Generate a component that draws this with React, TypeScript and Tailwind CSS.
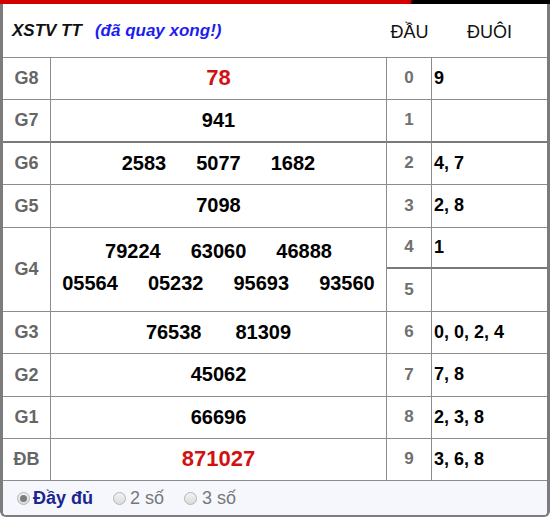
import React from "react";

type Prize = { label: string; nums: string[]; red?: boolean; thick?: boolean; gap?: string };

const PRIZES: Prize[] = [
  { label: "G8", nums: ["78"], red: true },
  { label: "G7", nums: ["941"], thick: true },
  { label: "G6", nums: ["2583", "5077", "1682"] },
  { label: "G5", nums: ["7098"] },
  { label: "G4", nums: ["79224", "63060", "46888", "05564", "05232", "95693", "93560"] },
  { label: "G3", nums: ["76538", "81309"], gap: "gap-[34px]" },
  { label: "G2", nums: ["45062"] },
  { label: "G1", nums: ["66696"] },
  { label: "ĐB", nums: ["871027"], red: true },
];

const DAU: [string, string][] = [
  ["0", "9"],
  ["1", ""],
  ["2", "4, 7"],
  ["3", "2, 8"],
  ["4", "1"],
  ["5", ""],
  ["6", "0, 0, 2, 4"],
  ["7", "7, 8"],
  ["8", "2, 3, 8"],
  ["9", "3, 6, 8"],
];

function DauCells({ d, thick }: { d: [string, string]; thick?: boolean }) {
  const b = thick ? "border-b-2 border-[#7a7a7a]" : "border-b border-[#8c8c8c]";
  return (
    <>
      <div className={`flex items-center justify-center border-r border-r-[#8c8c8c] ${b} pb-[1px] text-[17px] font-bold text-[#707070]`}>
        {d[0]}
      </div>
      <div className={`flex items-center pl-[2px] ${b} pb-[1px] text-[18px] font-bold text-black`}>{d[1]}</div>
    </>
  );
}

function Nums({ p }: { p: Prize }) {
  if (p.red)
    return <span className="text-[22px] text-[#d11212]">{p.nums[0]}</span>;
  if (p.label === "G4")
    return (
      <div className="-mt-[3px] flex flex-col items-center leading-[32px]">
        <div className="flex gap-[30px]">
          {p.nums.slice(0, 3).map((n) => <span key={n}>{n}</span>)}
        </div>
        <div className="flex gap-[30px]">
          {p.nums.slice(3).map((n) => <span key={n}>{n}</span>)}
        </div>
      </div>
    );
  return (
    <div className={`flex ${p.gap ?? "gap-[30px]"}`}>
      {p.nums.map((n) => <span key={n}>{n}</span>)}
    </div>
  );
}

function Radio({ on }: { on?: boolean }) {
  return (
    <span className="flex h-[13px] w-[13px] items-center justify-center rounded-full border border-[#b4b4b4] bg-[linear-gradient(#f2f2f2,#dcdcdc)]">
      {on && <span className="h-[7px] w-[7px] rounded-full bg-[#7d7d7d]" />}
    </span>
  );
}

export default function App() {
  const cells: React.ReactNode[] = [];
  PRIZES.forEach((p, i) => {
    const span = p.label === "G4";
    const b = p.thick ? "border-b-2 border-[#7a7a7a]" : "border-b border-[#8c8c8c]";
    cells.push(
      <div key={p.label + "l"} className={`flex items-center justify-center border-r border-r-[#8c8c8c] ${b} ${span ? "row-span-2" : ""} text-[18px] font-bold text-[#666]`}>
        {p.label}
      </div>,
      <div key={p.label + "p"} className={`flex items-center justify-center border-r border-r-[#8c8c8c] ${b} ${span ? "row-span-2" : ""} pb-[2px] text-[20px] font-bold text-black`}>
        <Nums p={p} />
      </div>
    );
    if (span) {
      cells.push(<DauCells key="d4" d={DAU[4]} thick />, <DauCells key="d5" d={DAU[5]} />);
    } else {
      const d = DAU[i < 4 ? i : i + 1];
      cells.push(<DauCells key={"d" + d[0]} d={d} thick={p.thick} />);
    }
  });

  return (
    <div className="h-[519px] w-[550px] bg-white font-['Liberation_Sans',Arial,sans-serif]">
      <div className="h-[4px] w-full bg-[linear-gradient(100deg,#d40000_74.5%,#000_75%)]" />
      <div className="overflow-hidden rounded-b-[6px] border-x-[3px] border-b-2 border-[#7c7c7c]">
        <div className="grid grid-cols-[48px_336px_45px_1fr] grid-rows-[54px_42px_43px_42px_43px_41px_43px_42px_43px_42px_42px]">
          <div className="col-span-2 flex items-center border-b border-[#8c8c8c] pl-[9px] pt-[1px] text-[17px] font-bold italic">
            <span className="text-[#111]">XSTV TT</span>
            <span className="ml-[13px] text-[#1c1ef0]">(đã quay xong!)</span>
          </div>
          <div className="flex items-center justify-center border-b border-[#8c8c8c] pt-[3px] text-[18px] text-[#111]">ĐẦU</div>
          <div className="flex items-center justify-center border-b border-[#8c8c8c] pt-[3px] text-[18px] text-[#111]">ĐUÔI</div>
          {cells}
        </div>
        <div className="flex h-[34px] items-center bg-[#f5f7fc] pl-[14px] text-[18px]">
          <Radio on />
          <span className="ml-[3px] font-bold text-[#1b2590]">Đầy đủ</span>
          <span className="ml-[20px]"><Radio /></span>
          <span className="ml-[4px] text-[#777]">2 số</span>
          <span className="ml-[20px]"><Radio /></span>
          <span className="ml-[5px] text-[#777]">3 số</span>
        </div>
      </div>
    </div>
  );
}
